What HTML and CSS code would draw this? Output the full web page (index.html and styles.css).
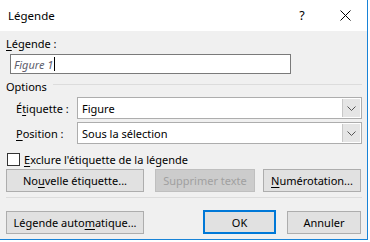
FILE: index.html
```html
<!DOCTYPE html>
<html lang="fr">
<head>
<meta charset="utf-8">
<link rel="stylesheet" href="styles.css">
</head>
<body>
<div class="window">
  <div class="titlebar">
    <span class="title">Légende</span>
    <span class="help">?</span>
    <span class="close"><svg width="11" height="11" viewBox="0 0 11 11"><path d="M0.5 0.5 L10.5 10.5 M10.5 0.5 L0.5 10.5" stroke="#000" stroke-width="1"/></svg></span>
  </div>
  <div class="body">
    <div class="label"><u>L</u>égende :</div>
    <div class="input"><span class="value">Figure 1</span><span class="caret"></span></div>
    <div class="group-head"><span>Options</span><span class="rule"></span></div>
    <div class="options">
      <span class="opt-label">É<u>t</u>iquette :</span>
      <div class="select"><span class="sel-text">Figure</span><span class="sel-btn"><svg width="9" height="5" viewBox="0 0 9 5"><path d="M0.5 0.5 L4.5 4.5 L8.5 0.5" fill="none" stroke="#555" stroke-width="1"/></svg></span></div>
      <span class="opt-label"><u>P</u>osition :</span>
      <div class="select"><span class="sel-text">Sous la sélection</span><span class="sel-btn"><svg width="9" height="5" viewBox="0 0 9 5"><path d="M0.5 0.5 L4.5 4.5 L8.5 0.5" fill="none" stroke="#555" stroke-width="1"/></svg></span></div>
    </div>
    <div class="check"><span class="box"></span><span><u>E</u>xclure l'étiquette de la légende</span></div>
    <div class="btn-row">
      <span class="btn b-new">No<u>u</u>velle étiquette...</span>
      <span class="btn disabled b-del">Supprimer texte</span>
      <span class="btn b-num"><u>N</u>umérotation...</span>
    </div>
    <div class="sep"></div>
    <div class="btn-row bottom">
      <span class="btn b-auto">Légende auto<u>m</u>atique...</span>
      <span class="spacer"></span>
      <span class="btn default b-ok">OK</span>
      <span class="btn b-cancel">Annuler</span>
    </div>
  </div>
</div>
</body>
</html>
```

FILE: styles.css
```css
html, body {
  margin: 0;
  padding: 0;
  background: #ffffff;
}
body {
  font-family: "Noto Sans", "Open Sans", sans-serif;
  font-size: 11px;
  color: #000;
}
u { text-decoration-thickness: 1px; text-underline-offset: 2px; }
.window {
  width: 367px;
  height: 239px;
  border-right: 1px solid #1883d7;
  border-bottom: 1px solid #1883d7;
  display: flex;
  flex-direction: column;
  background: #f0f0f0;
}
.titlebar {
  height: 31px;
  flex: none;
  background: #ffffff;
  display: flex;
  align-items: center;
}
.title {
  margin-left: 8px;
  font-size: 11.5px;
  flex: 1;
}
.help {
  font-size: 12.5px;
  width: 14px;
  text-align: center;
  margin-right: 31px;
}
.close {
  display: flex;
  margin-right: 16px;
}
.body {
  flex: 1;
  padding: 4px 5px 0 6px;
  display: flex;
  flex-direction: column;
}
.label {
  height: 18px;
  line-height: 18px;
}
.input {
  margin-top: 1px;
  margin-left: 4px;
  width: 276px;
  height: 18px;
  border: 1px solid #7a7a7a;
  background: #fff;
  display: flex;
  align-items: center;
  padding-left: 3px;
}
.value {
  font-style: italic;
  color: #5e5e6c;
}
.caret {
  width: 1px;
  height: 14px;
  background: #000;
  margin-left: 1px;
}
.group-head {
  margin-top: 3px;
  display: flex;
  align-items: center;
  height: 18px;
}
.group-head .rule {
  flex: 1;
  height: 1px;
  background: #dcdcdc;
  margin-left: 6px;
  margin-bottom: 3px;
}
.options {
  margin-top: 2px;
  margin-left: 10px;
  display: grid;
  grid-template-columns: 61px 1fr;
  row-gap: 3px;
  align-items: center;
}
.select {
  height: 20px;
  border: 1px solid #adadad;
  background: #fff;
  display: flex;
  align-items: center;
}
.sel-text {
  flex: 1;
  padding-left: 4px;
}
.sel-btn {
  width: 17px;
  height: 18px;
  margin-right: 1px;
  background: #e5e5e5;
  border-left: 1px solid #c8c8c8;
  display: flex;
  align-items: center;
  justify-content: center;
}
.check {
  margin-top: 7px;
  display: flex;
  align-items: center;
  height: 16px;
  margin-left: 1px;
}
.box {
  width: 11px;
  height: 11px;
  border: 1px solid #333;
  background: #fff;
  margin-right: 4px;
}
.btn-row {
  margin-top: 2px;
  display: flex;
  align-items: center;
}
.btn {
  height: 21px;
  border: 1px solid #adadad;
  background: #e1e1e1;
  display: flex;
  align-items: center;
  justify-content: center;
}
.btn.disabled {
  background: #cccccc;
  border-color: #bfbfbf;
  color: #a0a0a0;
}
.b-new { width: 136px; }
.b-del { width: 98px; margin-left: 11px; }
.b-num { width: 96px; margin-left: 8px; }
.sep {
  margin-top: 5px;
  height: 1px;
  background: #dcdcdc;
}
.btn-row.bottom { margin-top: 12px; }
.b-auto { width: 136px; }
.spacer { flex: 1; }
.b-ok {
  width: 69px;
  height: 20px;
  border: 2px solid #0078d7;
}
.b-cancel { width: 72px; margin-left: 11px; margin-right: 1px; }
```
